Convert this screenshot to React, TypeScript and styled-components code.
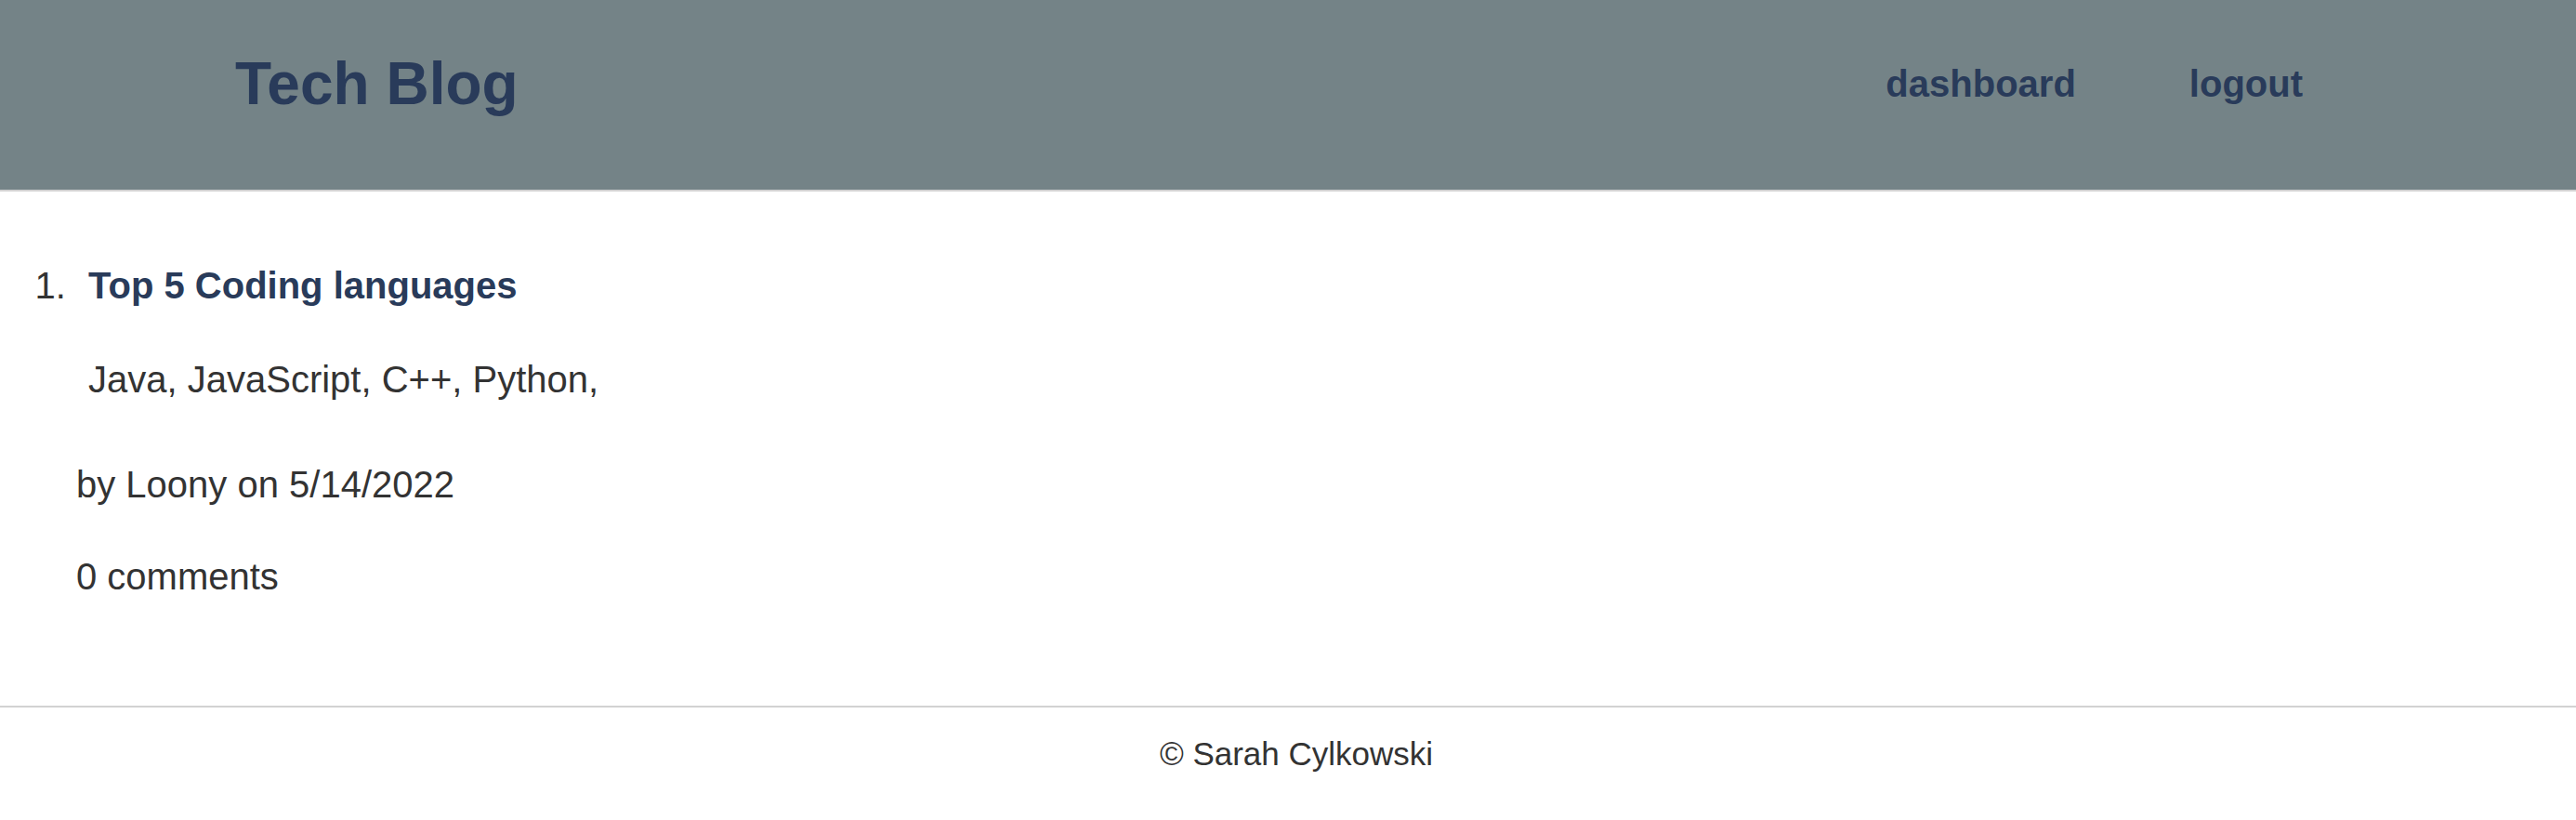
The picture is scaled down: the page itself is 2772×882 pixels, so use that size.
import styled, { createGlobalStyle } from "styled-components";

const EstiloGlobal = createGlobalStyle`
    html, body {
        margin: 0;
        padding: 0;
        background: #ffffff;
    }
    body {
        font-family: "Liberation Sans", Arial, Helvetica, sans-serif;
        color: #333333;
    }
`

const Cabecalho = styled.header`
    display: flex;
    align-items: center;
    justify-content: space-between;
    height: 179px;
    padding: 0 294px 25px 253px;
    background-color: #748387;
    border-bottom: 2px solid #d2d2d2;
`

const Marca = styled.h1`
    margin: 0;
    font-size: 64px;
    line-height: 1;
    font-weight: 700;
    color: #293b5a;
`

const Navegacao = styled.nav`
    display: flex;
    gap: 122px;
`

const LinkNav = styled.a`
    font-size: 40px;
    line-height: 1;
    font-weight: 700;
    color: #293b5a;
    text-decoration: none;
    cursor: pointer;
`

const ListaPosts = styled.ol`
    margin: 0;
    padding: 77px 0 0 82px;
    font-size: 40px;
    line-height: 48px;
`

const TituloPost = styled.a`
    display: block;
    margin-left: 13px;
    font-weight: 700;
    color: #293b5a;
    text-decoration: none;
`

const Texto = styled.p<{ $topo: number; $recuo?: number }>`
    margin: ${({ $topo }) => $topo}px 0 0 ${({ $recuo }) => $recuo ?? 0}px;
`

const Rodape = styled.footer`
    margin-top: 115px;
    padding: 28px 0 0 18px;
    border-top: 2px solid #d2d2d2;
    text-align: center;
    font-size: 35px;
    line-height: 44px;
    color: #333333;
`

const App = () => {
    return (
        <>
            <EstiloGlobal />
            <Cabecalho>
                <Marca>Tech Blog</Marca>
                <Navegacao>
                    <LinkNav>dashboard</LinkNav>
                    <LinkNav>logout</LinkNav>
                </Navegacao>
            </Cabecalho>
            <main>
                <ListaPosts>
                    <li>
                        <TituloPost>Top 5 Coding languages</TituloPost>
                        <Texto $topo={53} $recuo={13}>Java, JavaScript, C++, Python,</Texto>
                        <Texto $topo={65}>by Loony on 5/14/2022</Texto>
                        <Texto $topo={51}>0 comments</Texto>
                    </li>
                </ListaPosts>
            </main>
            <Rodape>© Sarah Cylkowski</Rodape>
        </>
    )
}

export default App
